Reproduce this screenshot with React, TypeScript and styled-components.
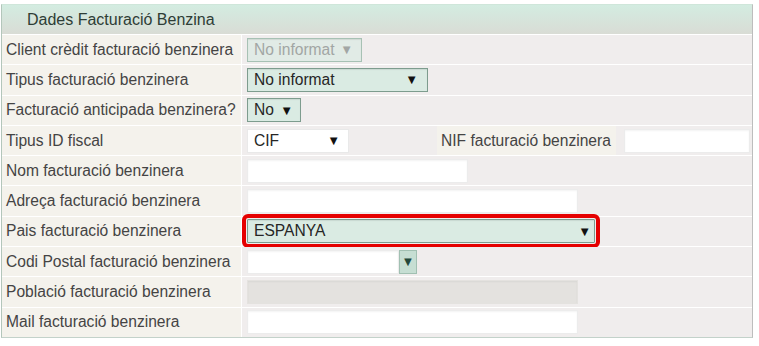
import styled, { createGlobalStyle } from 'styled-components';

const GlobalStyle = createGlobalStyle`
  html, body {
    margin: 0;
    padding: 0;
    background: #ffffff;
  }
  body {
    font-family: "Liberation Sans", Arial, sans-serif;
  }
`;

const Page = styled.div`
  padding: 4px 0 0 1px;
  width: 759px;
  height: 346px;
  box-sizing: border-box;
  overflow: hidden;
`;

const Panel = styled.section`
  width: 752px;
  box-sizing: border-box;
  border-top: 1px solid #cfe6da;
  border-left: 1px solid #b3c6bb;
  border-right: 1px solid #bdbdbd;
  border-bottom: 1px solid #c3d2ca;
  background: #ffffff;
`;

const PanelHeader = styled.h2`
  margin: 0;
  height: 29px;
  display: flex;
  align-items: center;
  padding-left: 25px;
  font-size: 16px;
  font-weight: normal;
  color: #2e3d36;
  background: linear-gradient(#d3ece1, #d9dcd5);
  border-bottom: 1px solid #ffffff;
`;

const FormGrid = styled.div`
  display: grid;
  grid-template-columns: 239px 1fr;
  grid-auto-rows: 29.3px;
  gap: 1px 1px;
  background: #ffffff;
`;

const Label = styled.div<{ $inline?: boolean }>`
  display: flex;
  align-items: center;
  padding-left: 4px;
  font-size: 15.6px;
  color: #444444;
  background: #f4f2ec;
  white-space: nowrap;
  ${(p) => p.$inline && 'width: 179px; height: 100%; box-sizing: border-box; margin-left: 88px;'}
`;

const Value = styled.div`
  display: flex;
  align-items: center;
  padding-left: 5px;
  background: #f0eded;
`;

const Select = styled.div<{ $w: number; $tone: 'green' | 'muted' | 'white'; $pr: number; $mark?: boolean }>`
  width: ${(p) => p.$w}px;
  height: 24px;
  box-sizing: border-box;
  display: flex;
  align-items: center;
  justify-content: space-between;
  padding: 0 ${(p) => p.$pr}px 0 6px;
  font-size: 15.6px;
  color: ${(p) => (p.$tone === 'muted' ? '#a2a6a4' : '#262626')};
  background: ${(p) =>
    p.$tone === 'white' ? '#ffffff' : p.$tone === 'muted' ? '#e1ebe6' : '#daebe3'};
  border: 1px solid
    ${(p) => (p.$tone === 'white' ? '#e9e9e9' : p.$tone === 'muted' ? '#a7c1b4' : '#7d9c8e')};
  box-shadow: ${(p) => (p.$tone === 'white' ? 'none' : 'inset 0 1px 1px rgba(0,0,0,0.08)')};
  ${(p) => p.$mark && 'outline: 4px solid #e50000; outline-offset: 1px; border-radius: 1px;'}
`;

const Arrow = styled.span<{ $color?: string }>`
  font-size: 13px;
  line-height: 1;
  color: ${(p) => p.$color || '#111'};
`;

const Input = styled.div<{ $w: number; $disabled?: boolean }>`
  width: ${(p) => p.$w}px;
  height: 24px;
  box-sizing: border-box;
  background: ${(p) => (p.$disabled ? '#e4e2df' : '#ffffff')};
  border: 1px solid ${(p) => (p.$disabled ? '#e4e2df' : '#ececec')};
  box-shadow: inset 0 1px 2px rgba(0, 0, 0, 0.05);
`;

const Combo = styled.div`
  display: flex;
  align-items: center;
`;

const ComboButton = styled.div`
  width: 18px;
  height: 24px;
  box-sizing: border-box;
  display: flex;
  align-items: center;
  justify-content: center;
  background: #c6ded3;
  border: 1px solid #a1c0b2;
`;

const SideInput = styled(Input)`
  margin-left: 8px;
`;

export default function App() {
  return (
    <Page>
      <GlobalStyle />
      <Panel>
        <PanelHeader>Dades Facturació Benzina</PanelHeader>
        <FormGrid>
          <Label>Client crèdit facturació benzinera</Label>
          <Value>
            <Select $w={115} $tone="muted" $pr={8}>
              No informat <Arrow $color="#a2a6a4">▼</Arrow>
            </Select>
          </Value>

          <Label>Tipus facturació benzinera</Label>
          <Value>
            <Select $w={181} $tone="green" $pr={9}>
              No informat <Arrow>▼</Arrow>
            </Select>
          </Value>

          <Label>Facturació anticipada benzinera?</Label>
          <Value>
            <Select $w={54} $tone="green" $pr={7}>
              No <Arrow>▼</Arrow>
            </Select>
          </Value>

          <Label>Tipus ID fiscal</Label>
          <Value>
            <Select $w={102} $tone="white" $pr={8}>
              CIF <Arrow>▼</Arrow>
            </Select>
            <Label $inline>NIF facturació benzinera</Label>
            <SideInput $w={126} />
          </Value>

          <Label>Nom facturació benzinera</Label>
          <Value>
            <Input $w={221} />
          </Value>

          <Label>Adreça facturació benzinera</Label>
          <Value>
            <Input $w={331} />
          </Value>

          <Label>Pais facturació benzinera</Label>
          <Value>
            <Select $w={348} $tone="green" $pr={3} $mark>
              ESPANYA <Arrow>▼</Arrow>
            </Select>
          </Value>

          <Label>Codi Postal facturació benzinera</Label>
          <Value>
            <Combo>
              <Input $w={152} />
              <ComboButton>
                <Arrow $color="#24483b">▼</Arrow>
              </ComboButton>
            </Combo>
          </Value>

          <Label>Població facturació benzinera</Label>
          <Value>
            <Input $w={331} $disabled />
          </Value>

          <Label>Mail facturació benzinera</Label>
          <Value>
            <Input $w={331} />
          </Value>
        </FormGrid>
      </Panel>
    </Page>
  );
}
